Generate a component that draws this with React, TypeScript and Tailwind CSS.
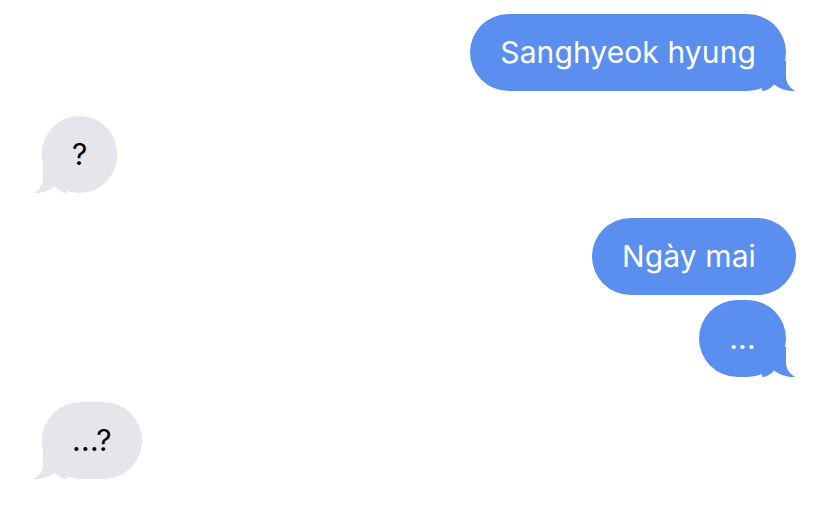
const BLUE = "#5a8fef";
const GRAY = "#e5e5ea";

function Tail({ side, color }: { side: "left" | "right"; color: string }) {
  return (
    <svg
      width="34"
      height="30"
      viewBox="0 0 34 30"
      className={
        side === "right"
          ? "absolute bottom-0 right-0"
          : "absolute bottom-0 left-0 -scale-x-100"
      }
    >
      <path
        d="M0 0 H24 V15 C24 22 28 27.5 33.5 30 C27 30.6 18 28.5 12 23.5 C9 27 5 30 0 30 Z"
        fill={color}
      />
    </svg>
  );
}

function Bubble({
  text,
  from,
  tail = true,
}: {
  text: string;
  from: "me" | "them";
  tail?: boolean;
}) {
  const me = from === "me";
  return (
    <div className={`relative ${me ? "self-end" : "self-start"}`}>
      {tail && <Tail side={me ? "right" : "left"} color={me ? BLUE : GRAY} />}
      <div
        className={`relative flex h-[77px] min-w-[75px] items-center justify-center rounded-[39px] px-[30px] text-[30px] ${
          text.startsWith(".") ? "tracking-[0.3px]" : "tracking-[0.1px]"
        } ${me ? "bg-[#5a8fef] text-white" : "bg-[#e5e5ea] text-black"} ${
          tail ? (me ? "mr-[10px]" : "ml-[9px]") : me ? "pr-[40px]" : ""
        }`}
      >
        {text}
      </div>
    </div>
  );
}

export default function App() {
  return (
    <div
      className="flex min-h-[506px] w-[828px] flex-col bg-white pl-[33px] pr-[32px] pt-[14px]"
      style={{ fontFamily: "Inter, 'Noto Sans', sans-serif" }}
    >
      <Bubble text="Sanghyeok hyung" from="me" />
      <div className="mt-[25px] flex flex-col">
        <Bubble text="?" from="them" />
      </div>
      <div className="mt-[25px] flex flex-col">
        <Bubble text="Ngày mai" from="me" tail={false} />
      </div>
      <div className="mt-[5px] flex flex-col">
        <Bubble text="..." from="me" />
      </div>
      <div className="mt-[25px] flex flex-col">
        <Bubble text="...?" from="them" />
      </div>
    </div>
  );
}
